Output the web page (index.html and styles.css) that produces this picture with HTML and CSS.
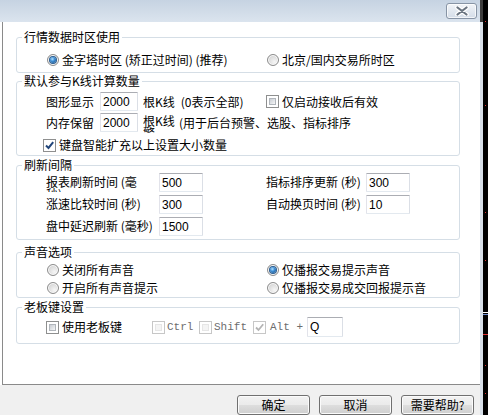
FILE: index.html
```html
<!DOCTYPE html>
<html lang="zh-CN">
<head>
<meta charset="utf-8">
<title>设置</title>
<link rel="stylesheet" href="styles.css">
</head>
<body>
<div class="screen">
  <div class="dialog">
    <div class="titlebar">
      <button class="close" aria-label="关闭">
        <svg width="14" height="10" viewBox="0 0 14 10">
          <path d="M2.5 1.5 L11.5 8.5 M11.5 1.5 L2.5 8.5" stroke="#ffffff" stroke-width="4.5" stroke-linecap="round"/>
          <path d="M2.5 1.5 L11.5 8.5 M11.5 1.5 L2.5 8.5" stroke="#6a7480" stroke-width="2.2" stroke-linecap="round"/>
        </svg>
      </button>
    </div>
    <div class="client-wrap">
      <div class="client">
        <fieldset class="grp g1">
          <legend>行情数据时区使用</legend>
          <div class="body b1 cols">
            <div class="opt"><span class="radio on"></span>金字塔时区 (矫正过时间) (推荐)</div>
            <div class="opt"><span class="radio"></span>北京/国内交易所时区</div>
          </div>
        </fieldset>

        <fieldset class="grp g2">
          <legend>默认参与K线计算数量</legend>
          <div class="body b2">
            <div class="row cols r1">
              <div class="cell">
                <span class="klabel">图形显示</span><input class="tb w38" value="2000"><span class="kunit">根K线</span><span class="note1">(0表示全部)</span>
              </div>
              <div class="opt"><span class="cb"></span>仅启动接收后有效</div>
            </div>
            <div class="row r2">
              <span class="klabel">内存保留</span><input class="tb w38" value="2000"><span class="kwrap">根K线警、</span><span class="note2">(用于后台预警、选股、指标排序</span>
            </div>
            <div class="opt r3 shift"><span class="cb on"><svg width="11" height="11" viewBox="0 0 11 11"><path d="M2 5.5 L4.5 8 L9.2 2.2" fill="none" stroke="#21457a" stroke-width="2"/></svg></span>键盘智能扩充以上设置大小数量</div>
          </div>
        </fieldset>

        <fieldset class="grp g3">
          <legend>刷新间隔</legend>
          <div class="body b3 grid3">
            <div class="cell"><span class="lbl wrap">报表刷新时间 (毫秒)</span><input class="tb w44" value="500"></div>
            <div class="cell"><span class="lbl rl">指标排序更新 (秒)</span><input class="tb w44" value="300"></div>
            <div class="cell"><span class="lbl">涨速比较时间 (秒)</span><input class="tb w44" value="300"></div>
            <div class="cell"><span class="lbl rl">自动换页时间 (秒)</span><input class="tb w44" value="10"></div>
            <div class="cell"><span class="lbl">盘中延迟刷新 (毫秒)</span><input class="tb w44" value="1500"></div>
          </div>
        </fieldset>

        <fieldset class="grp g4">
          <legend>声音选项</legend>
          <div class="body b4 cols">
            <div class="opt"><span class="radio"></span>关闭所有声音</div>
            <div class="opt"><span class="radio on"></span>仅播报交易提示声音</div>
            <div class="opt"><span class="radio"></span>开启所有声音提示</div>
            <div class="opt"><span class="radio"></span>仅播报交易成交回报提示音</div>
          </div>
        </fieldset>

        <fieldset class="grp g5">
          <legend>老板键设置</legend>
          <div class="body b5">
            <div class="opt bk1"><span class="cb"></span>使用老板键</div>
            <div class="opt bk-ctrl"><span class="cb dis"></span><span class="mono">Ctrl</span></div>
            <div class="opt bk-shift"><span class="cb dis"></span><span class="mono">Shift</span></div>
            <div class="opt bk-alt"><span class="cb dis on"><svg width="11" height="11" viewBox="0 0 11 11"><path d="M2 5.5 L4.5 8 L9.2 2.2" fill="none" stroke="#b4b4b4" stroke-width="1.8"/></svg></span><span class="mono">Alt +</span></div>
            <input class="tb w36" value="Q">
          </div>
        </fieldset>
      </div>
    </div>
    <div class="btnbar">
      <button class="btn">确定</button>
      <button class="btn">取消</button>
      <button class="btn">需要帮助?</button>
    </div>
  </div>
  <div class="edge"></div>
  <div class="desk">
    <svg width="5" height="415" viewBox="0 0 5 415">
      <rect x="2" y="21" width="1" height="1" fill="#e03030"/>
      <rect x="2" y="105" width="1" height="1" fill="#e03030"/>
      <rect x="2" y="212" width="1" height="1" fill="#e03030"/>
      <rect x="2" y="260" width="1" height="1" fill="#e03030"/>
      <rect x="0" y="312" width="5" height="1" fill="#ffffff"/>
      <rect x="0" y="314" width="5" height="1" fill="#6f8fd0"/>
      <rect x="0" y="334" width="5" height="1" fill="#e03030"/>
      <rect x="2" y="365" width="1" height="1" fill="#e03030"/>
      <rect x="2" y="393" width="1" height="1" fill="#e03030"/>
    </svg>
  </div>
</div>
</body>
</html>
```

FILE: styles.css
```css
html, body {
  margin: 0;
  padding: 0;
}
body {
  width: 488px;
  height: 415px;
  overflow: hidden;
  font-family: "Noto Sans CJK SC", "Noto Sans", sans-serif;
  font-size: 12px;
  color: #000;
  background: #000;
}
.screen {
  display: flex;
  width: 488px;
  height: 415px;
}
.dialog {
  width: 480px;
  display: flex;
  flex-direction: column;
  background: #fff;
}
.edge {
  width: 3px;
  background: linear-gradient(to bottom, #3c3c3c 0, #3c3c3c 22px, #d8e0e9 22px, #d8e0e9 100%);
}
.desk {
  width: 5px;
  background: #000;
  line-height: 0;
}

/* title bar */
.titlebar {
  height: 22px;
  box-sizing: border-box;
  background: linear-gradient(to bottom, #c6d3e2, #dbe4ee);
  display: flex;
  justify-content: flex-end;
  padding: 3px 3px 0 0;
}
.close {
  width: 31px;
  height: 16px;
  box-sizing: border-box;
  border: 1px solid #8794a5;
  border-radius: 3px;
  background: linear-gradient(to bottom, #f1f4f8, #d4dde8);
  box-shadow: inset 0 0 0 1px rgba(255,255,255,0.7);
  padding: 0;
  display: flex;
  align-items: center;
  justify-content: center;
}

/* client area */
.client-wrap {
  height: 363px;
  padding-left: 2px;
  background: #fff;
}
.client {
  height: 363px;
  box-sizing: border-box;
  border-left: 1px solid #8a8a8a;
  border-bottom: 1px solid #8a8a8a;
  padding-left: 13px;
  display: flex;
  flex-direction: column;
}

.grp {
  width: 444px;
  box-sizing: border-box;
  margin: 0;
  padding: 0;
  border: 1px solid #d5dee6;
  border-radius: 3px;
  min-inline-size: 0;
}
.grp legend {
  font-size: 12px;
  line-height: 14px;
  padding: 0 2px;
  margin-left: 5px;
}
.g1 { margin-top: 8px; }
.g2 { margin-top: 1px; }
.g3 { margin-top: 2px; }
.g4 { margin-top: 5px; }
.g5 { margin-top: 2px; }

.body {
  box-sizing: border-box;
  padding-left: 29px;
}
.cols {
  display: grid;
  grid-template-columns: 220px auto;
}
.b1 { height: 28px; padding-top: 3px; line-height: 16px; }
.b2 { height: 67px; padding-top: 4px; display: flex; flex-direction: column; }
.b3 { height: 67px; padding-top: 1px; }
.b4 { height: 38px; padding-top: 2px; line-height: 16px; }
.b5 { height: 29px; padding-top: 3px; display: flex; align-items: flex-start; }

.opt {
  display: flex;
  align-items: center;
  gap: 3px;
  line-height: 16px;
  white-space: nowrap;
}

/* radio */
.radio {
  width: 12px;
  height: 12px;
  margin-left: 1px;
  box-sizing: border-box;
  border-radius: 50%;
  border: 1px solid #8c8c8c;
  background: radial-gradient(circle at 65% 70%, #f6f6f6 0, #e2e2e2 45%, #c9c9c9 100%);
  box-shadow: inset 0 0 0 1px #fbfbfb;
  display: inline-flex;
  align-items: center;
  justify-content: center;
  flex: none;
}
.radio.on::after {
  content: "";
  width: 6px;
  height: 6px;
  border-radius: 50%;
  background: radial-gradient(circle at 40% 35%, #b5e2ff 0, #3f90d6 40%, #0e457f 100%);
  box-shadow: 0 0 0 1px #2c5f94;
}

/* checkbox */
.cb {
  width: 13px;
  height: 13px;
  box-sizing: border-box;
  border: 1px solid #8e8f8f;
  background: #fff;
  padding: 2px;
  display: inline-flex;
  flex: none;
}
.cb::before {
  content: "";
  flex: 1;
  border: 1px solid #b0b5bb;
  background: linear-gradient(135deg, #c9cdd3, #f5f6f7);
}
.cb.on {
  padding: 0;
}
.cb.on::before {
  display: none;
}
.cb.dis {
  border-color: #c7c7c7;
}
.cb.dis::before {
  border-color: #e6e6e6;
  background: #f4f4f4;
}

/* text boxes */
.tb {
  box-sizing: border-box;
  height: 19px;
  margin: 0;
  padding: 0 2px;
  border: 1px solid;
  border-color: #abadb3 #dbdfe6 #e3e9ef #e2e3ea;
  border-radius: 1px;
  font-family: "Liberation Sans", Arial, sans-serif;
  font-size: 12px;
  color: #000;
  background: #fff;
  outline: none;
  flex: none;
}
.w38 { width: 38px; }
.w44 { width: 44px; }
.w36 { width: 36px; height: 20px; }

/* group 2 */
.row {
  height: 19px;
  display: flex;
  align-items: center;
  white-space: nowrap;
}
.cols.row { display: grid; grid-template-columns: 220px auto; align-items: center; }
.cell {
  display: flex;
  align-items: center;
  white-space: nowrap;
}
.klabel { width: 54px; flex: none; line-height: 16px; }
.kunit { margin-left: 5px; line-height: 16px; }
.note1 { margin-left: 6px; line-height: 16px; }
.r2 { margin-top: 2px; align-items: flex-start; }
.r2 .klabel, .r2 .note2 { line-height: 19px; }
.kwrap {
  margin-left: 5px;
  width: 34px;
  height: 18px;
  margin-top: 2px;
  overflow: hidden;
  white-space: normal;
  line-height: 12px;
  flex: none;
}
.note2 { margin-left: 2px; }
.r3 { margin-top: 5px; }
.shift { margin-left: -3px; }

/* group 3 */
.grid3 {
  display: grid;
  grid-template-columns: 220px auto;
  grid-auto-rows: 19px;
  row-gap: 3px;
}
.lbl {
  width: 113px;
  height: 19px;
  box-sizing: border-box;
  padding-top: 3px;
  line-height: 12px;
  overflow: hidden;
  flex: none;
  white-space: nowrap;
}
.lbl.wrap {
  white-space: normal;
  padding-right: 13px;
}
.lbl.rl { width: 100px; }

/* group 5 */
.b5 .opt { height: 20px; }
.bk1 { width: 106px; flex: none; }
.bk-ctrl { width: 47px; flex: none; gap: 2px; }
.bk-shift { width: 54px; flex: none; gap: 2px; }
.bk-alt { width: 54px; flex: none; gap: 4px; }
.mono {
  font-family: "Liberation Mono", "DejaVu Sans Mono", monospace;
  font-size: 11px;
  color: #6d6d6d;
}

/* bottom buttons */
.btnbar {
  height: 30px;
  box-sizing: border-box;
  background: #f0f0f0;
  display: flex;
  justify-content: flex-end;
  gap: 9px;
  padding: 10px 6px 0 0;
}
.btn {
  width: 73px;
  height: 20px;
  box-sizing: border-box;
  border: 1px solid #707070;
  border-radius: 3px;
  background: linear-gradient(to bottom, #f2f2f2 0, #ebebeb 48%, #dddddd 52%, #cfcfcf 100%);
  box-shadow: inset 0 0 0 1px #fbfbfb;
  font-family: "Noto Sans CJK SC", sans-serif;
  font-size: 12px;
  line-height: 16px;
  padding: 0;
  color: #000;
}
```
